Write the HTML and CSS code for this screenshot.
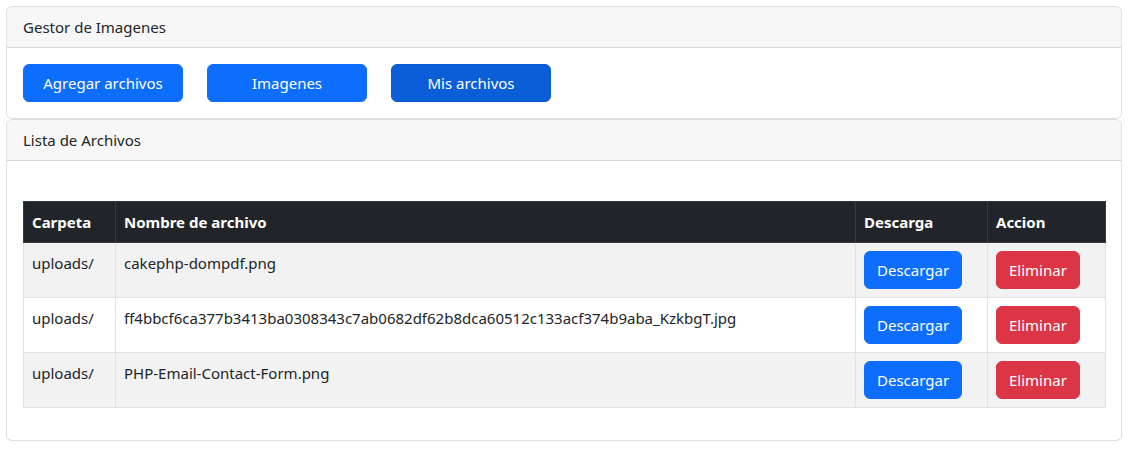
FILE: index.html
```html
<!DOCTYPE html>
<html lang="es">
<head>
<meta charset="utf-8">
<title>Gestor de Imagenes</title>
<link rel="stylesheet" href="styles.css">
</head>
<body>
<div class="page">
  <div class="card">
    <div class="card-header">Gestor de Imagenes</div>
    <div class="card-body nav-body">
      <a class="btn btn-primary btn-nav">Agregar archivos</a>
      <a class="btn btn-primary btn-nav">Imagenes</a>
      <a class="btn btn-primary btn-nav active">Mis archivos</a>
    </div>
  </div>
  <div class="card">
    <div class="card-header">Lista de Archivos</div>
    <div class="card-body list-body">
      <table class="table">
        <colgroup>
          <col class="c-folder">
          <col class="c-name">
          <col class="c-down">
          <col class="c-act">
        </colgroup>
        <thead>
          <tr><th>Carpeta</th><th>Nombre de archivo</th><th>Descarga</th><th>Accion</th></tr>
        </thead>
        <tbody>
          <tr>
            <td>uploads/</td><td>cakephp-dompdf.png</td>
            <td><a class="btn btn-primary">Descargar</a></td>
            <td><a class="btn btn-danger">Eliminar</a></td>
          </tr>
          <tr>
            <td>uploads/</td><td>ff4bbcf6ca377b3413ba0308343c7ab0682df62b8dca60512c133acf374b9aba_KzkbgT.jpg</td>
            <td><a class="btn btn-primary">Descargar</a></td>
            <td><a class="btn btn-danger">Eliminar</a></td>
          </tr>
          <tr>
            <td>uploads/</td><td>PHP-Email-Contact-Form.png</td>
            <td><a class="btn btn-primary">Descargar</a></td>
            <td><a class="btn btn-danger">Eliminar</a></td>
          </tr>
        </tbody>
      </table>
    </div>
  </div>
</div>
</body>
</html>
```

FILE: styles.css
```css
* { box-sizing: border-box; }
html, body { margin: 0; background: #fff; }
body {
  font-family: "Segoe UI", "Noto Sans", "Liberation Sans", sans-serif;
  font-size: 15px;
  line-height: 24px;
  color: #212529;
}
.page {
  padding: 6px 11px 0 6px;
}
.card {
  border: 1px solid rgba(0,0,0,0.125);
  border-radius: 6px;
  background: #fff;
  overflow: hidden;
}
.card-header {
  padding: 8px 16px;
  background: #f7f7f7;
  border-bottom: 1px solid rgba(0,0,0,0.125);
}
.card-body { padding: 16px; }
.nav-body {
  display: flex;
  gap: 24px;
}
.list-body { padding-top: 40px; }
.btn {
  display: inline-block;
  padding: 6px 12px;
  border: 1px solid transparent;
  border-radius: 6px;
  text-align: center;
  line-height: 24px;
  color: #fff;
  cursor: pointer;
  white-space: nowrap;
}
.btn-primary { background: #0d6efd; border-color: #0d6efd; }
.btn-primary.active { background: #0b5ed7; border-color: #0a58ca; }
.btn-danger { background: #dc3545; border-color: #dc3545; }
.btn-nav { width: 160px; }
.table {
  width: 100%;
  table-layout: fixed;
  border-collapse: collapse;
  margin-bottom: 16px;
  border: 1px solid #dee2e6;
}
.c-folder { width: 92px; }
.c-name { width: 740px; }
.c-down { width: 132px; }
.c-act { width: 118px; }
.table th, .table td {
  padding: 8px;
  border: 1px solid #dee2e6;
  text-align: left;
  vertical-align: top;
  white-space: nowrap;
}
.table th {
  background: #212529;
  color: #fff;
  font-weight: 700;
  border-color: #373b3e;
}
.table tbody tr:nth-child(odd) td { background: #f2f2f2; }
```
